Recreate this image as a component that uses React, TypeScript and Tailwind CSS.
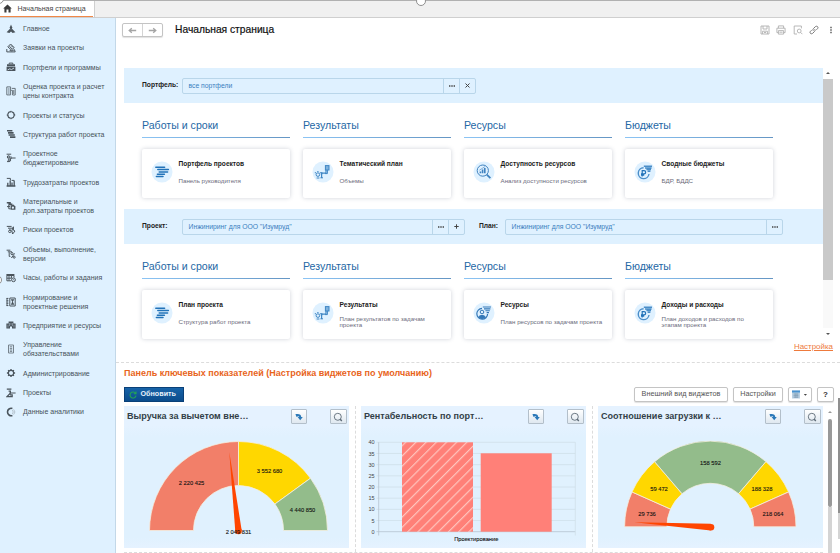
import React from 'react';

type NavItem = {
    lines: string[];
    icon: React.ReactNode;
};

type CardData = {
    heading: string;
    title: string;
    text: string[];
    icon: React.ReactNode;
};

const stroke = { fill: 'none', stroke: 'currentColor', strokeWidth: 1 };

const NAV: NavItem[] = [
    {
        lines: ['Главное'],
        icon: (
            <>
                <path d="M5 0.6L6.2 3.2L5.7 5.5H4.3L3.8 3.2Z" />
                <path d="M4 4.8L5 5.6L6 4.8L9.4 8.2L6.6 9L5 7.4L3.4 9L0.6 8.2Z" />
            </>
        ),
    },
    {
        lines: ['Заявки на проекты'],
        icon: (
            <>
                <path d="M4.6 1L8.2 4.6L5.4 7L1.8 3.8Z" {...stroke} />
                <path d="M3.3 3.2L6 5.8M5 2.4L7 4.4M0.8 6V8.9H9.2L8.4 6.6L6 8L3.6 7.4" {...stroke} />
            </>
        ),
    },
    {
        lines: ['Портфели и программы'],
        icon: (
            <>
                <path d="M1 2.2H9V4.2H1ZM0.6 4.8H9.4V9H0.6Z" />
                <path d="M3.2 2.2V1.1H6.8V2.2" {...stroke} />
                <path d="M1.6 8L3.8 6.8L5.4 7.6L8 6" fill="none" stroke="#dff1ff" strokeWidth={0.8} />
            </>
        ),
    },
    {
        lines: ['Оценка проекта и расчет', 'цены контракта'],
        icon: (
            <g opacity="0.8">
                <path d="M0.8 0.9H4.6V8.9H0.8ZM2 3H3.6M2 5H3.6M2 7H3.6" {...stroke} />
                <path d="M5.8 2.4H9.2V9H6.6V4.4H5.2M7.8 4V8" {...stroke} />
            </g>
        ),
    },
    {
        lines: ['Проекты и статусы'],
        icon: (
            <>
                <circle
                    cx="5"
                    cy="5"
                    r="3.3"
                    fill="none"
                    stroke="currentColor"
                    strokeWidth={1.2}
                    strokeDasharray="3.7 1.48"
                    strokeDashoffset="-0.74"
                />
                <path d="M5 0.6L6 1.7L5 2.8L4 1.7ZM5 7.2L6 8.3L5 9.4L4 8.3ZM0.4 5L1.7 4L3 5L1.7 6ZM7 5L8.3 4L9.6 5L8.3 6Z" />
            </>
        ),
    },
    {
        lines: ['Структура работ проекта'],
        icon: <path d="M1 1H6.4V2.6H1ZM2 3.1H7.6V4.7H2ZM2.6 5.2H8.8V6.8H2.6ZM4 7.3H9.4V8.9H4Z" />,
    },
    {
        lines: ['Проектное', 'бюджетирование'],
        icon: (
            <>
                <path d="M0.6 1.2H5.2M2 3.2V5.2M1 8.6H3.4L5 5H9.6M5 3.4V5.8" {...stroke} />
                <circle cx="2.6" cy="4" r="1.3" {...stroke} />
                <circle cx="3.4" cy="7.2" r="1.2" {...stroke} />
            </>
        ),
    },
    {
        lines: ['Трудозатраты проектов'],
        icon: (
            <>
                <path d="M0.6 9H9.4M1.8 8.6V5.8M4.2 8.6V3.4M6 8.6V5.6M8.2 8.6V4.4" fill="none" stroke="currentColor" strokeWidth={1.3} />
                <path d="M0.8 1.4H4.4V3.4M5.6 3.4H8.2V5" {...stroke} />
            </>
        ),
    },
    {
        lines: ['Материальные и', 'доп.затраты проектов'],
        icon: (
            <>
                <path d="M0.8 0.9H4.8V2.6H6.4V4.2H2.4V2.6H0.8Z" />
                <path d="M4.6 4.6L7.4 3.6L9.4 5.4V8.8H4.6Z" />
                <path d="M2.8 4V7.8H4.6M1 5.6H4" {...stroke} />
                <circle cx="6.9" cy="6.7" r="1.1" fill="#dff1ff" />
            </>
        ),
    },
    {
        lines: ['Риски проектов'],
        icon: (
            <>
                <path d="M0.8 1.4H5.6M2 3.2H7.4M3 5H5.2M7.4 1.8V5.2L9 6L6.6 9L5.8 5.8Z" {...stroke} />
                <circle cx="3.8" cy="6.4" r="1.2" {...stroke} />
            </>
        ),
    },
    {
        lines: ['Объемы, выполнение,', 'версии'],
        icon: (
            <>
                <path d="M0.6 1.2H4.4M1.8 2.8H6M3.2 3.2V7.4H4.4M8.6 4.4L5.4 9" {...stroke} />
                <circle cx="6" cy="4.6" r="1.1" {...stroke} />
                <circle cx="8.2" cy="8.2" r="1" {...stroke} />
            </>
        ),
    },
    {
        lines: ['Часы, работы и задания'],
        icon: (
            <>
                <path d="M0.4 1H8.4V3H0.4Z" />
                <path d="M0.9 3V7.8H5M3 3V7.6M5.4 3V5.4M0.9 5.2H5.4M8 3V4.4" {...stroke} />
                <circle cx="7.5" cy="6.8" r="1.9" {...stroke} />
                <path d="M7.5 5.8V6.9H8.4" fill="none" stroke="currentColor" strokeWidth={0.6} />
            </>
        ),
    },
    {
        lines: ['Нормирование и', 'проектные решения'],
        icon: (
            <>
                <path d="M3.8 1H9.2V9H3.8ZM0.6 1.4H2.4M0.6 3.8H2.4M0.6 6.2H2.4M0.6 8.6H2.4M1 1V9" {...stroke} />
                <path d="M4.8 2.2H8.4L6.8 4.8L8.4 7.8H4.8L6.2 4.8Z" />
            </>
        ),
    },
    {
        lines: ['Предприятие и ресурсы'],
        icon: (
            <>
                <path d="M0.4 3.4H2.6V1.4H7.4V3.4H9.6V8.6H6V6.6H4V8.6H0.4Z" />
                <path d="M2 4.6V7.6M5 3V5.2M8 4.6V7.6M3.5 3V6M6.5 3V6" fill="none" stroke="#dff1ff" strokeWidth={0.4} />
            </>
        ),
    },
    {
        lines: ['Управление', 'обязательствами'],
        icon: (
            <g opacity="0.7">
                <path d="M2.5 1H7.5V9H2.5Z" {...stroke} />
                <path d="M3.8 2.8H6.2M3.8 4.4H6.2M3.8 6H6.2M3.8 7.4H6.2" {...stroke} />
            </g>
        ),
    },
    {
        lines: ['Администрирование'],
        icon: (
            <>
                <circle cx="5" cy="5" r="2.6" fill="none" stroke="currentColor" strokeWidth={1.1} />
                <path
                    d="M5 0.9V2.4M5 7.6V9.1M0.9 5H2.4M7.6 5H9.1M2.1 2.1L3.2 3.2M6.8 6.8L7.9 7.9M7.9 2.1L6.8 3.2M3.2 6.8L2.1 7.9"
                    fill="none"
                    stroke="currentColor"
                    strokeWidth={1.3}
                />
            </>
        ),
    },
    {
        lines: ['Проекты'],
        icon: (
            <path d="M0.8 1.2H5.4M2.6 3.2H5M4.4 3V5M3.4 5H9.6M4.6 5L1 8.6H6.8M4 6.8H6.2V8.6" {...stroke} strokeWidth={1.2} />
        ),
    },
    {
        lines: ['Данные аналитики'],
        icon: (
            <>
                <path d="M6.4 1.5A3.7 3.7 0 1 0 6.4 8.5" fill="none" stroke="currentColor" strokeWidth={1.6} />
                <path d="M6 3A2.3 2.3 0 0 1 6 7M7.6 2.4A3.6 3.6 0 0 1 7.6 7.6" fill="none" stroke="#a9b6c0" strokeWidth={0.8} />
            </>
        ),
    },
];

const PlanIcon = () => (
    <path
        d="M4.8 6.2H13.6M6.8 8.6H17.4M8.2 11H16.6M6.4 13.3H13.4M5.4 15.6H12"
        fill="none"
        stroke="#2273b9"
        strokeWidth={1.5}
        strokeLinecap="round"
    />
);

const ResultIcon = () => (
    <g fill="none" stroke="#3f86c4" strokeWidth={1}>
        <circle cx="5.9" cy="13.6" r="1.8" />
        <path d="M4.6 17H7.4M2.9 11.4L3.8 12M5.9 10V11M8.8 11.4L8 12M9.6 17V12.2H14V8.8" strokeWidth={1.2} />
        <rect x="13.4" y="4.6" width="3.6" height="4.4" fill="#7fb2dd" />
        <path d="M8.4 16.8H11M15.4 9V12.6H13" />
        <path d="M9 12.3H10.4" strokeWidth={2} />
    </g>
);

const SearchChartIcon = () => (
    <g fill="none" stroke="#3f82bf" strokeWidth={1}>
        <circle cx="9.8" cy="9.6" r="5.6" />
        <path d="M13.8 13.6L17.4 17.2" strokeWidth={1.8} />
        <path d="M7.4 12.2V10.4M9.6 12.2V8.6M11.8 12.2V7" strokeWidth={1.6} />
        <path d="M6.4 9.2L12 5.6" strokeWidth={0.6} />
    </g>
);

const ResourceIcon = () => (
    <g fill="none" stroke="#3478b8" strokeWidth={1}>
        <path d="M9 6.4A5.4 5.4 0 1 0 14.6 12" strokeWidth={1.2} />
        <circle cx="9" cy="10" r="1.8" />
        <path d="M5.6 15.4C6 12.8 12 12.8 12.4 15.4L9 16.6Z" fill="#3478b8" />
        <path d="M9.8 5H18M11 6.9H17.4M12.4 8.8H16.8M13.6 10.6H16" strokeWidth={1.1} />
    </g>
);

const RubleIcon = () => (
    <g fill="none" stroke="#4a8ec9" strokeWidth={1.2}>
        <path d="M9.6 6.8A5.4 5.4 0 1 0 15 13" strokeWidth={1.4} />
        <path d="M8.2 15.4V9.6H10A1.6 1.6 0 0 1 10 12.9H7M7 14.2H10.2" stroke="#2273b9" />
        <path d="M9.8 5.2H18M11 6.9H17.6M12.4 8.6H17M13.6 10.3H16.4" strokeWidth={1.5} />
    </g>
);

const PORTFOLIO_CARDS: CardData[] = [
    { heading: 'Работы и сроки', title: 'Портфель проектов', text: ['Панель руководителя'], icon: <PlanIcon /> },
    { heading: 'Результаты', title: 'Тематический план', text: ['Объемы'], icon: <ResultIcon /> },
    { heading: 'Ресурсы', title: 'Доступность ресурсов', text: ['Анализ доступности ресурсов'], icon: <SearchChartIcon /> },
    { heading: 'Бюджеты', title: 'Сводные бюджеты', text: ['БДР, БДДС'], icon: <RubleIcon /> },
];

const PROJECT_CARDS: CardData[] = [
    { heading: 'Работы и сроки', title: 'План проекта', text: ['Структура работ проекта'], icon: <PlanIcon /> },
    { heading: 'Результаты', title: 'Результаты', text: ['План результатов по задачам', 'проекта'], icon: <ResultIcon /> },
    { heading: 'Ресурсы', title: 'Ресурсы', text: ['План ресурсов по задачам проекта'], icon: <ResourceIcon /> },
    { heading: 'Бюджеты', title: 'Доходы и расходы', text: ['План доходов и расходов по', 'этапам проекта'], icon: <RubleIcon /> },
];

const TopTabs = () => (
    <div className="flex h-[18px] shrink-0 border-t border-b border-t-[#b0b0b0] border-b-[#cfcfcf] bg-[#f0f0f0]">
        <div className="flex h-[16px] w-[95px] items-center border-r border-[#cfcfcf] bg-white">
            <div className="flex h-full w-[93px] items-center border-b border-[#f08848]">
                <svg className="ml-[3px] h-[9px] w-[9px]" viewBox="0 0 9 9" fill="#3a3a3a">
                    <path d="M4.5 0.6L8.8 4.6H7.6V8.4H5.5V5.6H3.5V8.4H1.4V4.6H0.2Z" />
                </svg>
                <span className="mt-[1px] ml-[5.5px] text-[7.05px] text-[#444]">Начальная страница</span>
            </div>
        </div>
    </div>
);

const Sidebar = () => (
    <nav className="w-[116px] shrink-0 border-r border-[#c3d8e8] bg-[#dff1ff] pt-[0.9px]">
        {NAV.map((item) => (
            <div key={item.lines[0]} className="flex items-center py-[5.19px]">
                <svg className="-my-[1px] ml-[6px] h-[10px] w-[10px] shrink-0" viewBox="0 0 10 10" fill="currentColor" color="#4a545c">
                    {item.icon}
                </svg>
                <div className="ml-[7px] text-[7px] leading-[9px] whitespace-nowrap text-[#47515a]">
                    {item.lines.map((line) => (
                        <div key={line}>{line}</div>
                    ))}
                </div>
            </div>
        ))}
    </nav>
);

const PageHeader = () => (
    <div className="flex h-[50px] shrink-0 items-start pt-[5px] pl-[6px]">
        <div className="flex h-[14px] w-[41px] rounded-[2px] border border-[#c4c4c4] bg-white shadow-[0_1px_1px_rgba(0,0,0,0.12)]">
            <div className="flex flex-1 items-center justify-center border-r border-[#d4d4d4]">
                <svg className="h-[7px] w-[9px]" viewBox="0 0 9 7" fill="none" stroke="#a4a4a4" strokeWidth={1.3}>
                    <path d="M8.2 3.5H1.2M3.8 1.2L1.2 3.5L3.8 5.8" />
                </svg>
            </div>
            <div className="flex flex-1 items-center justify-center">
                <svg className="h-[7px] w-[9px]" viewBox="0 0 9 7" fill="none" stroke="#a4a4a4" strokeWidth={1.3}>
                    <path d="M0.8 3.5H7.8M5.2 1.2L7.8 3.5L5.2 5.8" />
                </svg>
            </div>
        </div>
        <h1 className="ml-[12px] text-[10.25px] leading-[14px] text-[#111] [-webkit-text-stroke:0.2px_#111]">Начальная страница</h1>
        <div className="mr-[4px] ml-auto flex items-center gap-[6.6px] pt-[2px]">
            <svg className="h-[10px] w-[10px]" viewBox="0 0 10 10" fill="none" stroke="#b0b0b0" strokeWidth={0.9}>
                <path d="M1 1H9V9H1ZM3 1V4H7V1M2.6 9V6.2H7.4V9M4 7.5H6" />
            </svg>
            <svg className="h-[10px] w-[10px]" viewBox="0 0 10 10" fill="none" stroke="#b0b0b0" strokeWidth={0.9}>
                <path d="M2.4 3.2V0.9H7.6V3.2M2.4 7.6H0.9V3.2H9.1V7.6H7.6M2.4 5.6H7.6V9.1H2.4ZM3.4 7.2H6.6" />
            </svg>
            <svg className="h-[10px] w-[10px]" viewBox="0 0 10 10" fill="none" stroke="#b0b0b0" strokeWidth={0.9}>
                <path d="M4 9H1.2V1H8.4V3.4M7.6 7.4L9.4 9.2" />
                <circle cx="6.2" cy="6" r="1.9" />
            </svg>
            <svg className="h-[10px] w-[10px]" viewBox="0 0 10 10" fill="none" stroke="#777" strokeWidth={1}>
                <path d="M4.4 5.8C3.6 4.8 3.8 4.2 4.6 3.4L6.4 1.6C8 0.4 9.8 2.2 8.6 3.6L7.4 4.8" />
                <path d="M5.6 4.2C6.4 5.2 6.2 5.8 5.4 6.6L3.6 8.4C2 9.6 0.2 7.8 1.4 6.4L2.6 5.2" />
            </svg>
            <svg className="h-[10px] w-[10px]" viewBox="0 0 10 10" fill="#6a6a6a">
                <path d="M4.2 1.8H5.8V3.2H4.2ZM4.2 4.3H5.8V5.7H4.2ZM4.2 6.8H5.8V8.2H4.2Z" />
            </svg>
        </div>
    </div>
);

type FieldProps = { value: string; width: string; buttons: string[] };

const Field: React.FC<FieldProps> = ({ value, width, buttons }) => (
    <div className={`flex h-[16px] rounded-[2px] border border-[#b9d6ea] ${width}`}>
        <span className="flex-1 pl-[5.5px] text-[6.8px] leading-[13px] text-[#3a7fc0]">{value}</span>
        {buttons.map((b) => (
            <span key={b} className="flex w-[16px] items-center justify-center border-l border-[#b9d6ea]">
                {b === 'dots' && (
                    <svg className="h-[2px] w-[6px]" viewBox="0 0 6 2" fill="#444">
                        <path d="M0 0.3H1.4V1.7H0ZM2.3 0.3H3.7V1.7H2.3ZM4.6 0.3H6V1.7H4.6Z" />
                    </svg>
                )}
                {b === 'clear' && (
                    <svg className="h-[5px] w-[5px]" viewBox="0 0 5 5" fill="none" stroke="#444" strokeWidth={1}>
                        <path d="M0.5 0.5L4.5 4.5M4.5 0.5L0.5 4.5" />
                    </svg>
                )}
                {b === 'add' && (
                    <svg className="h-[5px] w-[5px]" viewBox="0 0 5 5" fill="none" stroke="#444" strokeWidth={1}>
                        <path d="M2.5 0.3V4.7M0.3 2.5H4.7" />
                    </svg>
                )}
            </span>
        ))}
    </div>
);

const CardRow: React.FC<{ cards: CardData[] }> = ({ cards }) => (
    <div className="flex gap-[13px] pl-[18px]">
        {cards.map((card) => (
            <section key={card.heading} className="w-[148px]">
                <h2 className="flex h-[14px] items-center text-[10.6px] leading-none whitespace-nowrap text-[#2467a5]">{card.heading}</h2>
                <div className="mt-[5px] h-[1px] bg-linear-to-r from-[#8cc4f4] to-[#6596c4]" />
                <div className="mt-[11px] flex h-[49px] rounded-[2px] bg-white shadow-[0_0_4px_rgba(60,70,100,0.25)]">
                    <svg className="mt-[12px] ml-[8.5px] h-[22px] w-[22px] shrink-0" viewBox="0 0 22 22">
                        <circle cx="11" cy="11" r="10.5" fill="#dff1ff" />
                        {card.icon}
                    </svg>
                    <div className="ml-[6px] pt-[9.5px] whitespace-nowrap">
                        <div className="text-[6.6px] leading-[9px] font-bold text-[#1c1c1c]">{card.title}</div>
                        <div className="mt-[4.5px] flex h-[17px] flex-col justify-center text-[6.2px] leading-[6px] text-[#6c6c7c]">
                            {card.text.map((t) => (
                                <div key={t}>{t}</div>
                            ))}
                        </div>
                    </div>
                </div>
            </section>
        ))}
    </div>
);

const Workspace = () => (
    <div className="flex h-[271px] shrink-0 pl-[8px]">
        <div className="w-[699px]">
            <div className="flex h-[35px] items-center bg-[#dff1ff] pl-[18px]">
                <span className="w-[40px] text-[6.7px] font-bold text-[#222]">Портфель:</span>
                <Field value="все портфели" width="w-[294px]" buttons={['dots', 'clear']} />
            </div>
            <div className="pt-[15px]">
                <CardRow cards={PORTFOLIO_CARDS} />
            </div>
            <div className="mt-[11px] flex h-[35px] items-center bg-[#dff1ff] pl-[18px]">
                <span className="w-[40px] text-[6.7px] font-bold text-[#222]">Проект:</span>
                <Field value={'Инжиниринг для ООО "Изумруд"'} width="w-[283px]" buttons={['dots', 'add']} />
                <span className="ml-[14px] w-[26px] text-[6.7px] font-bold text-[#222]">План:</span>
                <Field value={'Инжиниринг для ООО "Изумруд"'} width="w-[278px]" buttons={['dots']} />
            </div>
            <div className="pt-[15px]">
                <CardRow cards={PROJECT_CARDS} />
            </div>
        </div>
        <div className="flex w-[10px] flex-col items-center">
            <div className="flex h-[11px] items-center">
                <svg className="h-[2px] w-[4px]" viewBox="0 0 4 2" fill="#555">
                    <path d="M2 0L4 2H0Z" />
                </svg>
            </div>
            <div className="h-[202px] w-full bg-[#c9c9c9]" />
            <div className="h-[48px] w-full bg-[#f9f9f9]" />
            <div className="flex h-[11px] items-center">
                <svg className="h-[2px] w-[4px]" viewBox="0 0 4 2" fill="#555">
                    <path d="M0 0H4L2 2Z" />
                </svg>
            </div>
        </div>
    </div>
);

const polar = (cx: number, cy: number, r: number, deg: number) => {
    const a = (deg * Math.PI) / 180;
    return `${(cx + r * Math.cos(a)).toFixed(2)} ${(cy - r * Math.sin(a)).toFixed(2)}`;
};

// Ring segment running clockwise from one angle to a smaller one
const ring = (cx: number, cy: number, outer: number, inner: number, from: number, to: number) =>
    `M${polar(cx, cy, outer, from)}A${outer} ${outer} 0 0 1 ${polar(cx, cy, outer, to)}` +
    `L${polar(cx, cy, inner, to)}A${inner} ${inner} 0 0 0 ${polar(cx, cy, inner, from)}Z`;

type Segment = { from: number; to: number; color: string };
type Label = { x: number; y: number; text: string };

type GaugeProps = {
    cx: number;
    cy: number;
    outer: number;
    inner: number;
    segments: Segment[];
    labels: Label[];
    needle: string;
    hub: [number, number];
};

const Gauge: React.FC<GaugeProps> = ({ cx, cy, outer, inner, segments, labels, needle, hub }) => (
    <svg className="h-[123px] w-[225px]" viewBox="0 0 225 123">
        {segments.map((s) => (
            <path key={s.from} d={ring(cx, cy, outer, inner, s.from, s.to)} fill={s.color} stroke="#f4efe0" strokeWidth={0.8} />
        ))}
        <path d={needle} fill="#ff4500" />
        <circle cx={hub[0]} cy={hub[1]} r="3.3" fill="#ff4500" />
        {labels.map((l) => (
            <text key={l.text} x={l.x} y={l.y + 2} textAnchor="middle" fontSize="5.75" fill="#111" stroke="#111" strokeWidth={0.1}>
                {l.text}
            </text>
        ))}
    </svg>
);

const TICKS = [0, 5, 10, 15, 20, 25, 30, 35, 40];

const BarChart = () => (
    <svg className="h-[123px] w-[225px]" viewBox="0 0 225 123">
        <defs>
            <pattern id="hatch" width="7.2" height="7.2" patternUnits="userSpaceOnUse" patternTransform="rotate(45)">
                <rect width="7.2" height="7.2" fill="#ff8078" />
                <rect width="1.2" height="7.2" fill="#ffc4bd" />
            </pattern>
        </defs>
        {TICKS.map((t) => {
            const y = 106.7 - t * 2.235;
            return (
                <g key={t}>
                    <path d={`M15.5 ${y}H214.3`} stroke={t === 0 ? '#b4c3ce' : '#cfdfea'} strokeWidth={0.8} />
                    <text x="13.6" y={y + 2.1} textAnchor="end" fontSize="5.5" fill="#444">
                        {t}
                    </text>
                </g>
            );
        })}
        <path d="M17.7 17.3V110.5" stroke="#b4c3ce" strokeWidth={0.8} />
        <path d="M214.3 17.3V110.5" stroke="#cfdfea" strokeWidth={0.8} />
        <rect x="41" y="17.3" width="71" height="89.4" fill="url(#hatch)" />
        <rect x="119.7" y="28.3" width="71" height="78.4" fill="#ff8078" />
        <text x="115.3" y="116" textAnchor="middle" fontSize="5.75" fill="#111" stroke="#111" strokeWidth={0.1}>
            Проектирование
        </text>
    </svg>
);

const WidgetButton: React.FC<{ children: React.ReactNode }> = ({ children }) => (
    <div className="flex h-[15px] w-[16.5px] items-center justify-center rounded-[1px] border border-[#b3bfca] bg-linear-to-b from-white to-[#dfe8f0]">
        {children}
    </div>
);

const Widget: React.FC<{ title: string; children: React.ReactNode }> = ({ title, children }) => (
    <div className="flex h-[142px] w-[225px] shrink-0 flex-col bg-[#e5f2ff]">
        <div className="flex h-[19px] shrink-0 items-start pt-[3px] pr-[2.3px] pl-[3px]">
            <h3 className="flex-1 text-[9.05px] leading-[15px] font-bold whitespace-nowrap text-[#333f48]">{title}</h3>
            <WidgetButton>
                <svg className="h-[8px] w-[8px]" viewBox="0 0 8 8" fill="#2a78b8">
                    <path d="M0.4 1.2C3.6 0.4 6.4 1.4 6.2 4H7.8L5.2 7.2L2.6 4H4.2C4.2 2.8 2.6 3.4 1.6 4Z" />
                </svg>
            </WidgetButton>
            <div className="w-[23px]" />
            <WidgetButton>
                <svg className="h-[10px] w-[10px]" viewBox="0 0 10 10" fill="none" stroke="#5d6b77" strokeWidth={0.9}>
                    <circle cx="4.8" cy="4.8" r="3.5" />
                    <path d="M7 7L8.8 9" strokeWidth={1.4} />
                </svg>
            </WidgetButton>
        </div>
        <div className="flex-1 bg-[linear-gradient(#e5f2ff_0px,#e0f1fe_12px,#e0f1fe_112px,#e5f2ff_123px)]">{children}</div>
    </div>
);

const ToolButton: React.FC<{ width: string; children: React.ReactNode }> = ({ width, children }) => (
    <div
        className={`flex h-[15px] items-center justify-center rounded-[2px] border border-[#c4c4c4] bg-white text-[7.25px] whitespace-nowrap text-[#555] shadow-[0_1px_1px_rgba(0,0,0,0.12)] ${width}`}
    >
        {children}
    </div>
);

const RED = '#f27f69';
const YELLOW = '#ffd700';
const GREEN = '#93bc8b';

const Indicators = () => (
    <div className="flex flex-1 flex-col border-t border-dashed border-[#dcdcdc]">
        <h2 className="mt-[4px] ml-[8px] text-[9px] leading-[12px] font-bold whitespace-nowrap text-[#e8641b]">
            Панель ключевых показателей (Настройка виджетов по умолчанию)
        </h2>
        <div className="mt-[8px] flex h-[15px] pr-[6px] pl-[8px]">
            <div className="flex h-[15px] w-[60px] items-center border border-[#0a4078] bg-linear-to-b from-[#1763a8] to-[#0b4c8c] pl-[3.5px] text-[7.2px] font-bold text-[#e8f1fa]">
                <svg className="mr-[4px] h-[8px] w-[8px]" viewBox="0 0 8 8" fill="none" stroke="#23a455" strokeWidth={1.1}>
                    <path d="M6.6 2.4A3 3 0 1 0 7 4.6M7 0.6V2.8H4.8" />
                </svg>
                Обновить
            </div>
            <div className="ml-auto flex gap-[5px]">
                <ToolButton width="w-[94px]">Внешний вид виджетов</ToolButton>
                <ToolButton width="w-[50px]">Настройки</ToolButton>
                <ToolButton width="w-[24px]">
                    <svg className="h-[9px] w-[18px]" viewBox="0 0 18 9" fill="none">
                        <rect x="1" y="0.5" width="8" height="8" fill="#b9d0e2" />
                        <rect x="1" y="0.5" width="8" height="2" fill="#4a93cf" />
                        <path d="M2.5 4H7.5M2.5 5.6H7.5M2.5 7.2H7.5M4.2 3.4V8M6 3.4V8" stroke="#7795ad" strokeWidth={0.6} />
                        <path d="M12.8 4H16L14.4 5.8Z" fill="#444" />
                    </svg>
                </ToolButton>
                <ToolButton width="w-[17px]">
                    <b className="text-[8px] text-[#333]">?</b>
                </ToolButton>
            </div>
        </div>
        <div className="mt-[4px] flex h-[147px] pl-[8px]">
            <div className="flex h-[147px] border-b border-dashed border-[#dcdcdc]">
                <Widget title="Выручка за вычетом вне…">
                    <Gauge
                        cx={114.5}
                        cy={105.5}
                        outer={89}
                        inner={45}
                        segments={[
                            { from: 180, to: 90, color: RED },
                            { from: 90, to: 36, color: YELLOW },
                            { from: 36, to: 0, color: GREEN },
                        ]}
                        labels={[
                            { x: 67.5, y: 58, text: '2 220 425' },
                            { x: 145.5, y: 45.5, text: '3 552 680' },
                            { x: 178.5, y: 85, text: '4 440 850' },
                            { x: 114.5, y: 106.5, text: '2 049 831' },
                        ]}
                        needle="M105.3 27L111.3 106.5L117.7 105.5Z"
                        hub={[114.5, 106]}
                    />
                </Widget>
                <div className="mr-[5px] ml-[6px] w-[1px] border-l border-dashed border-[#dcdcdc]" />
                <Widget title="Рентабельность по порт…">
                    <BarChart />
                </Widget>
                <div className="mr-[5px] ml-[6px] w-[1px] border-l border-dashed border-[#dcdcdc]" />
                <Widget title="Соотношение загрузки к …">
                    <Gauge
                        cx={112.3}
                        cy={101.8}
                        outer={85.7}
                        inner={43.5}
                        segments={[
                            { from: 180, to: 156, color: RED },
                            { from: 156, to: 130.5, color: YELLOW },
                            { from: 130.5, to: 49.5, color: GREEN },
                            { from: 49.5, to: 24, color: YELLOW },
                            { from: 24, to: 0, color: RED },
                        ]}
                        labels={[
                            { x: 49, y: 88.5, text: '29 736' },
                            { x: 61, y: 63.5, text: '59 472' },
                            { x: 112.5, y: 37.5, text: '158 592' },
                            { x: 164, y: 63.5, text: '188 328' },
                            { x: 175, y: 89, text: '218 064' },
                        ]}
                        needle="M36.3 97.3L112.8 98.8L112.8 105.4Z"
                        hub={[113, 102.2]}
                    />
                </Widget>
            </div>
            <div className="ml-[4px] flex w-[5px] flex-col items-center">
                <svg className="mt-[5px] mb-[6px] h-[2px] w-[4px] shrink-0" viewBox="0 0 4 2" fill="#999">
                    <path d="M2 0L4 2H0Z" />
                </svg>
                <div className="h-[88px] w-[4px] shrink-0 rounded-full bg-[#999]" />
                <div className="w-[4px] flex-1 bg-[#d4d4d4]" />
            </div>
        </div>
    </div>
);

export default function App() {
    return (
        <div className="relative flex h-[553px] w-[840px] flex-col overflow-hidden bg-white font-['Liberation_Sans',Arial,sans-serif]">
            <TopTabs />
            <div className="flex min-h-0 flex-1">
                <Sidebar />
                <main className="flex min-w-0 flex-1 flex-col">
                    <PageHeader />
                    <Workspace />
                    <div className="flex h-[23px] shrink-0 justify-end pt-[2px] pr-[7px]">
                        <a className="text-[7.95px] leading-[11px] text-[#ee7a3c] underline">Настройка</a>
                    </div>
                    <Indicators />
                </main>
            </div>

            {/* Outer scrollbar of the lower panel */}
            <div className="absolute top-[398px] right-0 h-[141px] w-[2px] bg-[#d4d4d4]">
                <div className="h-[115px] bg-[#8f8f8f]" />
            </div>

            {/* Frame handles */}
            <div className="absolute -top-[4px] left-[416px] h-[10px] w-[10px] rounded-full border-[1.5px] border-[#8f8f8f] bg-white" />
            <div className="absolute top-[275px] -left-[8px] h-[10px] w-[10px] rounded-full border border-[#8f8f8f] bg-white" />
            <div className="absolute -top-[6px] -left-[6px] h-[10px] w-[10px] rounded-full border border-[#8f8f8f] bg-white" />
        </div>
    );
}
